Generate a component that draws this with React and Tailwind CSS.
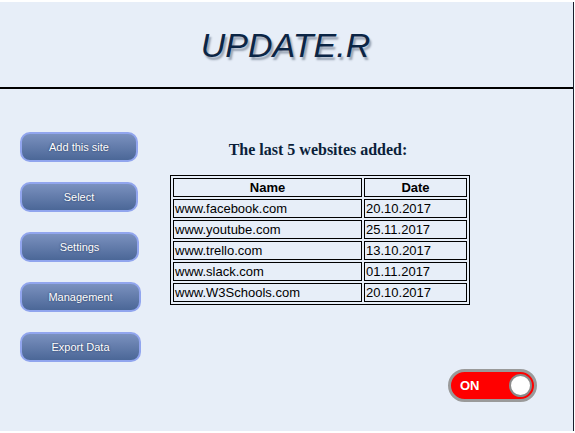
import React from "react";

const rows = [
  ["www.facebook.com", "20.10.2017"],
  ["www.youtube.com", "25.11.2017"],
  ["www.trello.com", "13.10.2017"],
  ["www.slack.com", "01.11.2017"],
  ["www.W3Schools.com", "20.10.2017"],
];

const buttons = [
  ["Add this site", "w-[118px]"],
  ["Select", "w-[118px]"],
  ["Settings", "w-[119px]"],
  ["Management", "w-[121px]"],
  ["Export Data", "w-[121px]"],
];

export default function App() {
  return (
    <div className="w-[575px] h-[433px] bg-white pt-[2px] overflow-hidden">
      <div className="w-[574px] h-[429px] bg-[#e7eef8] border-r border-r-[#1a1f2e] flex flex-col font-['Liberation_Sans',Arial,sans-serif]">
        <div className="h-[87px] border-b-2 border-black flex items-center justify-center pr-[2px]">
          <h1 className="text-[34px] italic text-[#0b2545] leading-none mt-[1px] [text-shadow:2px_3px_2px_#97a2b2]">
            UPDATE.R
          </h1>
        </div>
        <div className="flex flex-row pt-[43px]">
          <div className="flex flex-col gap-[20px] pl-[20px]">
            {buttons.map(([label, w]) => (
              <div
                key={label}
                className={`${w} h-[30px] rounded-[10px] border-2 border-[#91a5ee] bg-gradient-to-b from-[#7b91bf] to-[#4b6797] flex items-center justify-center text-white text-[11px] [text-shadow:0_0_2px_#1d2f55]`}
              >
                {label}
              </div>
            ))}
          </div>
          <div className="ml-[29px] flex flex-col">
            <h2 className="w-[300px] text-center pr-[4px] mt-[9px] font-['Liberation_Serif','Times_New_Roman',serif] font-bold text-[16px] leading-[18px] text-[#0b1f3a]">
              The last 5 websites added:
            </h2>
            <table className="mt-[16px] w-[300px] table-fixed border-separate border-spacing-[2px] border border-black text-[13px] text-black">
              <thead>
                <tr>
                  <th className="w-[189px] h-[19px] border border-black p-0 leading-[17px] text-[13px] font-bold text-center">
                    Name
                  </th>
                  <th className="h-[19px] border border-black p-0 leading-[17px] text-[13px] font-bold text-center">
                    Date
                  </th>
                </tr>
              </thead>
              <tbody>
                {rows.map(([n, d]) => (
                  <tr key={n}>
                    <td className="h-[19px] border border-black py-0 px-[1px] leading-[17px] text-left">
                      {n}
                    </td>
                    <td className="h-[19px] border border-black py-0 px-[1px] leading-[17px] text-left">
                      {d}
                    </td>
                  </tr>
                ))}
              </tbody>
            </table>
          </div>
        </div>
        <div className="flex justify-end pr-[36px] mt-[7px]">
          <div className="w-[89px] h-[33px] rounded-full border-[3px] border-[#9a9a9a] bg-[#ff0000] flex items-center justify-between pl-[9px] pr-[2px]">
            <span className="text-white font-bold text-[13px] leading-none">ON</span>
            <div className="w-[23px] h-[23px] rounded-full bg-white border-2 border-[#8a8a8a]" />
          </div>
        </div>
      </div>
    </div>
  );
}
